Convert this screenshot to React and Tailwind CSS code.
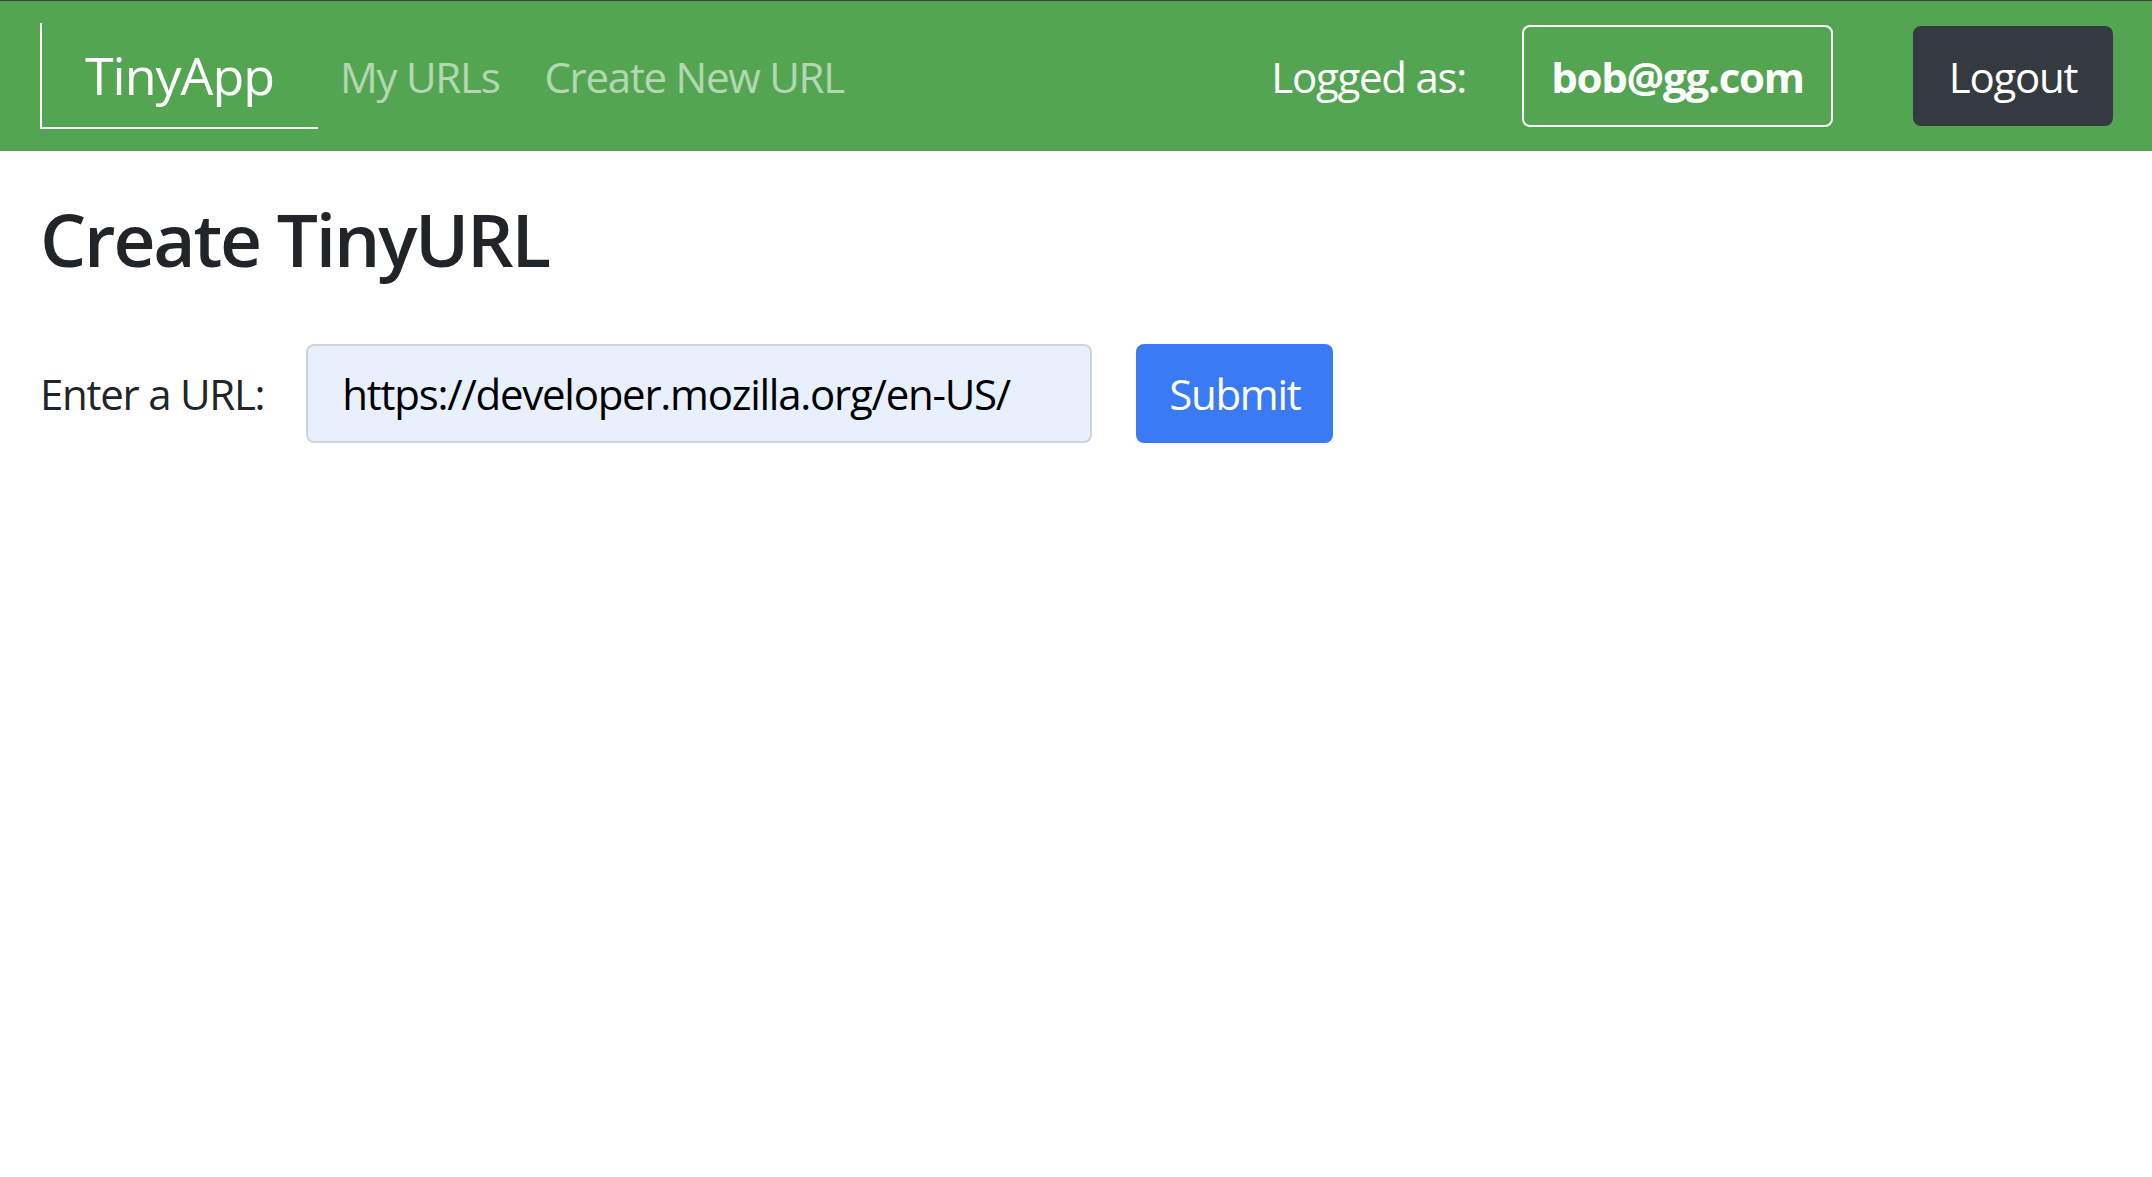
import React from "react";

const font = { fontFamily: '"Open Sans", "Noto Sans", sans-serif' };

function NavBar() {
  return (
    <nav className="flex items-center h-[151px] border-t border-[#3c3c3c] bg-[#53a552] pl-[40px] pr-[39px]">
      {/* brand with the odd left/bottom border */}
      <a className="flex items-center h-[106px] w-[278px] border-l-2 border-b-2 border-white pl-[43px] text-[52px] text-white tracking-[-0.02em]">
        TinyApp
      </a>
      <div className="flex items-center gap-[45px] ml-[22px] text-[42px] text-white/55 tracking-[-0.03em]">
        <a>My URLs</a>
        <a>Create New URL</a>
      </div>
      <div className="ml-auto flex items-center">
        <span className="text-[42px] text-white tracking-[-0.03em]">Logged as:</span>
        <div className="ml-[56px] flex items-center justify-center h-[102px] w-[311px] border-2 border-white rounded-[8px] text-[42px] font-bold text-white tracking-[-0.03em]">
          bob@gg.com
        </div>
        <button className="ml-[80px] h-[100px] w-[200px] rounded-[8px] bg-[#343a40] text-[42px] text-white tracking-[-0.03em]">
          Logout
        </button>
      </div>
    </nav>
  );
}

export default function App() {
  return (
    <div className="min-h-screen bg-white" style={font}>
      <NavBar />
      <main className="px-[40px]">
        <h2 className="mt-[44px] text-[73px] font-semibold text-[#212529] leading-[1.2] tracking-[-0.03em]">
          Create TinyURL
        </h2>
        <form className="mt-[61px] flex items-center">
          <label className="text-[42px] text-[#212529] tracking-[-0.03em]">Enter a URL:</label>
          <input
            readOnly
            value="https://developer.mozilla.org/en-US/"
            className="ml-[42px] h-[99px] w-[786px] rounded-[8px] border-2 border-[#ced4da] bg-[#e8f0fe] px-[34px] text-[42px] text-black tracking-[-0.03em] outline-none"
          />
          <button
            type="button"
            className="ml-[44px] h-[99px] w-[197px] rounded-[8px] bg-[#3a7bf5] text-[42px] text-white tracking-[-0.03em]"
          >
            Submit
          </button>
        </form>
      </main>
    </div>
  );
}
